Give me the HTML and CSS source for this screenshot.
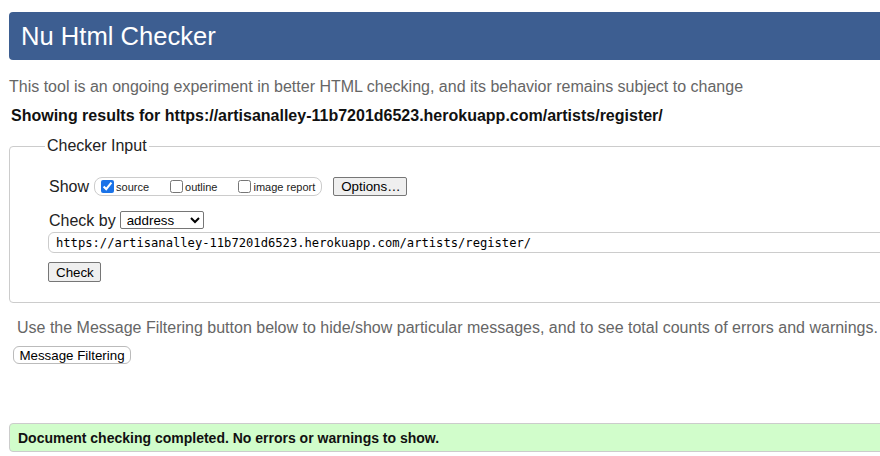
FILE: index.html
```html
<!DOCTYPE html>
<html>
<head>
<meta charset="utf-8">
<link rel="stylesheet" href="styles.css">
</head>
<body>
<div class="page">
  <header class="banner"><h1 class="title">Nu Html Checker</h1></header>
  <p class="intro">This tool is an ongoing experiment in better HTML checking, and its behavior remains subject to change</p>
  <p class="showing">Showing results for https://artisanalley-11b7201d6523.herokuapp.com/artists/register/</p>
  <fieldset class="checker">
    <legend class="legend">Checker Input</legend>
    <div class="row show-row">
      <span class="label">Show</span>
      <span class="group">
        <label class="opt"><input type="checkbox" checked><span>source</span></label>
        <label class="opt"><input type="checkbox"><span>outline</span></label>
        <label class="opt"><input type="checkbox"><span>image report</span></label>
      </span>
      <button class="btn options">Options…</button>
    </div>
    <div class="row by-row">
      <span class="label">Check by</span>
      <select class="select"><option>address</option></select>
    </div>
    <input class="url" type="text" value="https://artisanalley-11b7201d6523.herokuapp.com/artists/register/">
    <button class="btn check">Check</button>
  </fieldset>
  <p class="filter-note">Use the Message Filtering button below to hide/show particular messages, and to see total counts of errors and warnings.</p>
  <button class="btn filter">Message Filtering</button>
  <div class="success">Document checking completed. No errors or warnings to show.</div>
</div>
</body>
</html>
```

FILE: styles.css
```css
html { overflow: hidden; }
body {
  margin: 0;
  font-family: "Liberation Sans", Arial, sans-serif;
  color: #222;
  background: #fff;
}
.page {
  width: 960px;
  padding: 12px 0 0 9px;
}
.banner {
  height: 48px;
  background: #3d5e91;
  border-radius: 4px;
  display: flex;
  align-items: center;
}
.title {
  margin: 0 0 0 12px;
  font-size: 25.6px;
  font-weight: normal;
  color: #fff;
  line-height: 30px;
}
.intro {
  margin: 17px 0 0 0;
  font-size: 16px;
  line-height: 20px;
  color: #666;
}
.showing {
  margin: 9px 0 0 2px;
  font-size: 16px;
  line-height: 20px;
  font-weight: bold;
  color: #111;
}
.checker {
  margin: 11px 0 0 0;
  border: 1px solid #ccc;
  border-radius: 4px;
  padding: 0 0 20px 39px;
  min-width: 0;
}
.legend {
  font-size: 16px;
  line-height: 18px;
  padding: 0 2px;
  margin-left: -4px;
  color: #222;
}
.row {
  display: flex;
  align-items: center;
}
.show-row {
  margin-top: 22px;
  height: 19px;
}
.label {
  font-size: 16px;
  line-height: 19px;
}
.group {
  display: inline-flex;
  align-items: center;
  height: 17px;
  margin-left: 5px;
  padding: 0 6px 0 6px;
  border: 1px solid #ccc;
  border-radius: 8px;
}
.opt {
  display: inline-flex;
  align-items: center;
  font-size: 11px;
  margin-right: 21px;
}
.opt:last-child { margin-right: 0; }
.opt input {
  margin: 0 2px 0 0;
  width: 13px;
  height: 13px;
  accent-color: #1a73e8;
}
.btn {
  font-family: "Liberation Sans", Arial, sans-serif;
  font-size: 13.33px;
  color: #000;
  background: #efefef;
  border: 1px solid #767676;
  border-radius: 2px;
  padding: 0 7px;
}
.options {
  margin-left: 11px;
  height: 19px;
  width: 74px;
}
.by-row {
  margin-top: 15px;
  height: 18px;
}
.select {
  margin-left: 4px;
  width: 84px;
  height: 18px;
  font-family: "Liberation Sans", Arial, sans-serif;
  font-size: 13.33px;
  color: #000;
  background: #fff;
  border: 1px solid #767676;
  border-radius: 2px;
  padding: 0 0 0 2px;
}
.url {
  display: block;
  box-sizing: border-box;
  margin: 3px 0 0 -1px;
  width: 900px;
  height: 21px;
  border: 1px solid #ccc;
  border-radius: 6px;
  padding: 0 6px 0 7px;
  font-family: "DejaVu Sans Mono", "Liberation Mono", monospace;
  font-size: 12.15px;
  color: #000;
  background: #fff;
}
.check {
  display: block;
  margin: 9px 0 0 -1px;
  height: 20px;
  width: 53px;
}
.filter-note {
  margin: 15px 0 0 8px;
  font-size: 16px;
  line-height: 20px;
  color: #666;
}
.filter {
  display: block;
  margin: 8px 0 0 4px;
  height: 18px;
  width: 118px;
  padding: 0;
  background: #fff;
  border: 1px solid #bbb;
  border-radius: 6px;
}
.success {
  margin-top: 59px;
  box-sizing: border-box;
  height: 29px;
  border: 1px solid #ccc;
  border-radius: 4px;
  background: #d1fdcb;
  padding-left: 8px;
  display: flex;
  align-items: center;
  font-size: 14px;
  font-weight: bold;
  color: #111;
}
```
